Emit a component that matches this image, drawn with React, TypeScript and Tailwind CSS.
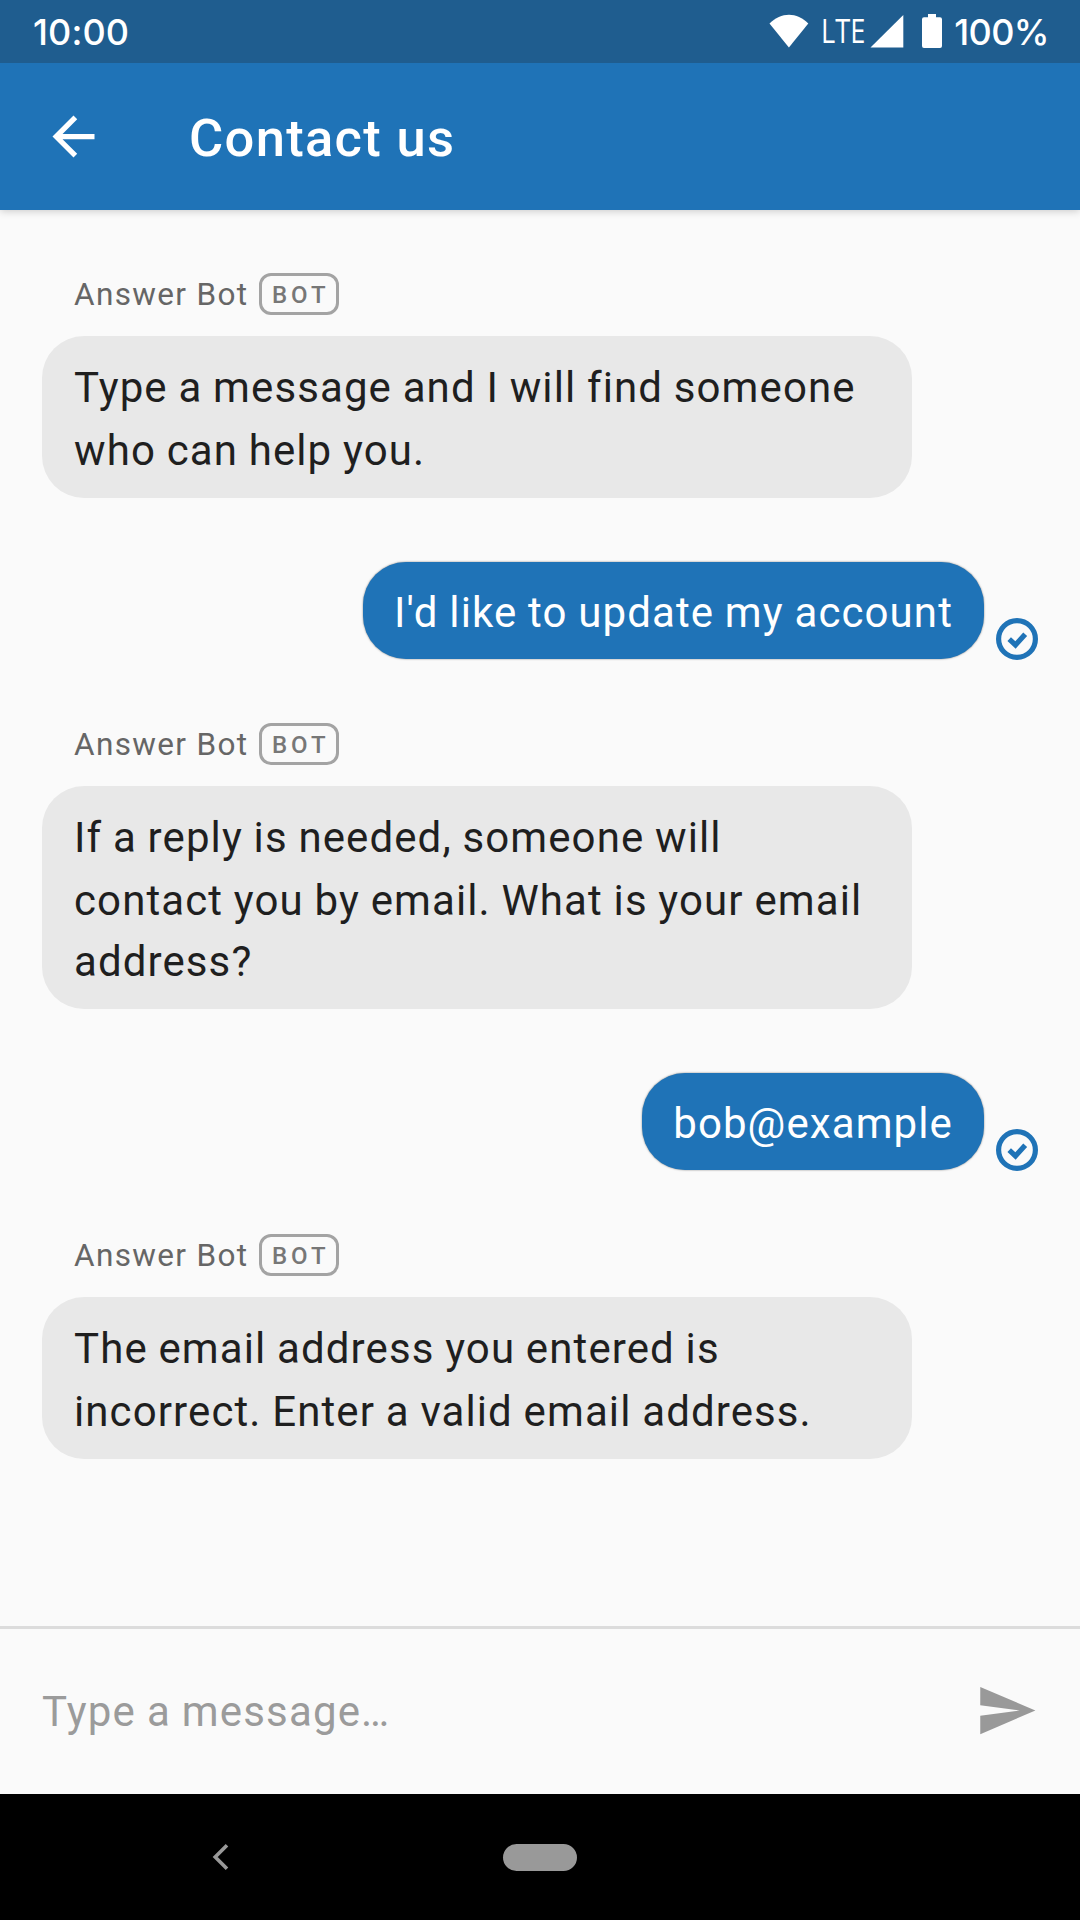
import React from "react";

const StatusBar = () => (
  <header className="z-20 flex h-[63px] shrink-0 items-center justify-between bg-[#1f5d8f] pl-[33px] pr-[31px] font-['Inter',sans-serif] text-[36px] leading-[63px] font-medium text-white">
    <span className="pt-[2px] tracking-[0.1px]">10:00</span>
    <div className="flex items-center">
      <svg className="-mt-[2px] mr-[12px] h-[34px] w-[40px]" viewBox="0 0 40 34" fill="currentColor">
        <path d="M0.5 9.5C12 -2.3 28 -2.3 39.3 9.5L19.9 33.5Z" />
      </svg>
      <span className="-mt-[2px] w-[49px] font-['Open_Sans',sans-serif] text-[32px] font-normal">
        <span className="inline-block origin-left scale-x-[0.85]">LTE</span>
      </span>
      <svg className="mr-[18px] h-[34px] w-[34px]" viewBox="0 0 34 34" fill="currentColor">
        <path d="M0.5 32.500L33.300 0V32.500Z" />
      </svg>
      <svg className="mr-[12px] -mt-px h-[34px] w-[20px]" viewBox="0 0 20 34" fill="currentColor">
        <path d="M6 0h8v3.300h4a2 2 0 0 1 2 2V32a2 2 0 0 1-2 2H2a2 2 0 0 1-2-2V5.300a2 2 0 0 1 2-2h4z" />
      </svg>
      <span className="pt-[2px] tracking-[-0.6px]">100%</span>
    </div>
  </header>
);

const AppBar = () => (
  <div className="z-10 flex h-[147px] shrink-0 items-center bg-[#1f73b7] pl-[42px] text-white shadow-[0_1px_8px_rgba(0,0,0,0.2)]">
    <svg className="h-[63px] w-[63px]" viewBox="0 0 24 24" fill="currentColor">
      <path d="M20 11H7.830l5.590-5.590L12 4l-8 8 8 8 1.410-1.410L7.830 13H20v-2z" />
    </svg>
    <h1 className="pt-[3px] pl-[84px] text-[52.5px] leading-[62px] font-medium tracking-[1.3px]">Contact us</h1>
  </div>
);

const BotMessage = ({ lines }: { lines: string[] }) => (
  <section className="flex flex-col items-start">
    <div className="flex h-[42px] items-center pl-[32px]">
      <span className="w-[185px] pt-[2px] text-[31.5px] leading-[42px] tracking-[1.35px] text-[#666]">Answer Bot</span>
      <span className="flex h-[42px] w-[80px] items-center rounded-[12px] border-[3px] border-[#a3a3a3] pt-px pl-[10px] text-[24px] leading-[34px] font-medium tracking-[3.9px] text-[#777]">
        BOT
      </span>
    </div>
    <p className="mt-[21px] w-[870px] rounded-[42px] bg-[#e8e8e8] pt-[21px] pb-[17px] pl-[32px] text-[42px] leading-[61px] tracking-[1.1px] text-[#1f1f1f] [word-spacing:-0.8px]">
      {lines.map((line) => (
        <span key={line} className="block whitespace-nowrap first:mb-[2px]">
          {line}
        </span>
      ))}
    </p>
  </section>
);

const UserMessage = ({ text }: { text: string }) => (
  <section className="my-[64px] flex items-end justify-end">
    <p className="h-[97px] rounded-[43px] bg-[#1f73b7] px-[31px] pt-[20px] text-[42px] leading-[61px] tracking-[1.1px] text-white shadow-[0_0_2px_rgba(0,0,0,0.5)] [word-spacing:-0.8px]">
      {text}
    </p>
    <svg className="-mb-px ml-[12px] h-[42px] w-[42px]" viewBox="0 0 42 42" fill="none" stroke="#1f73b7">
      <circle cx="21" cy="21" r="18.400" strokeWidth="5.200" />
      <path d="M13.200 21.200L19.500 27L29.200 16.200" strokeWidth="5.200" />
    </svg>
  </section>
);

export default function App() {
  return (
    <div className="flex h-[1920px] w-[1080px] flex-col overflow-hidden bg-[#fafafa] font-['Roboto',sans-serif]">
      <StatusBar />
      <AppBar />
      <main className="flex-1 px-[42px] pt-[63px]">
        <BotMessage lines={["Type a message and I will find someone", "who can help you."]} />
        <UserMessage text="I'd like to update my account" />
        <BotMessage lines={["If a reply is needed, someone will", "contact you by email. What is your email", "address?"]} />
        <UserMessage text="bob@example" />
        <BotMessage lines={["The email address you entered is", "incorrect. Enter a valid email address."]} />
      </main>
      <div className="flex h-[168px] shrink-0 items-center justify-between border-t-[3px] border-[#dcdcdc] pr-[42px] pl-[42px]">
        <span className="text-[42px] leading-[61px] tracking-[1.15px] text-[#9b9b9b] [word-spacing:-0.6px]">Type a message…</span>
        <svg className="-mt-[3px] h-[63px] w-[63px]" viewBox="0 0 24 24" fill="#999">
          <path d="M2.010 21L23 12 2.010 3 2 10l15 2-15 2z" />
        </svg>
      </div>
      <nav className="flex h-[126px] shrink-0 items-center bg-black">
        <svg className="ml-[212px] h-[28px] w-[18px]" viewBox="0 0 18 28" fill="none" stroke="#999" strokeWidth="3.600">
          <path d="M15 2.200L3.200 14L15 25.800" />
        </svg>
        <span className="ml-[273px] h-[27px] w-[74px] rounded-full bg-[#999]" />
      </nav>
    </div>
  );
}
